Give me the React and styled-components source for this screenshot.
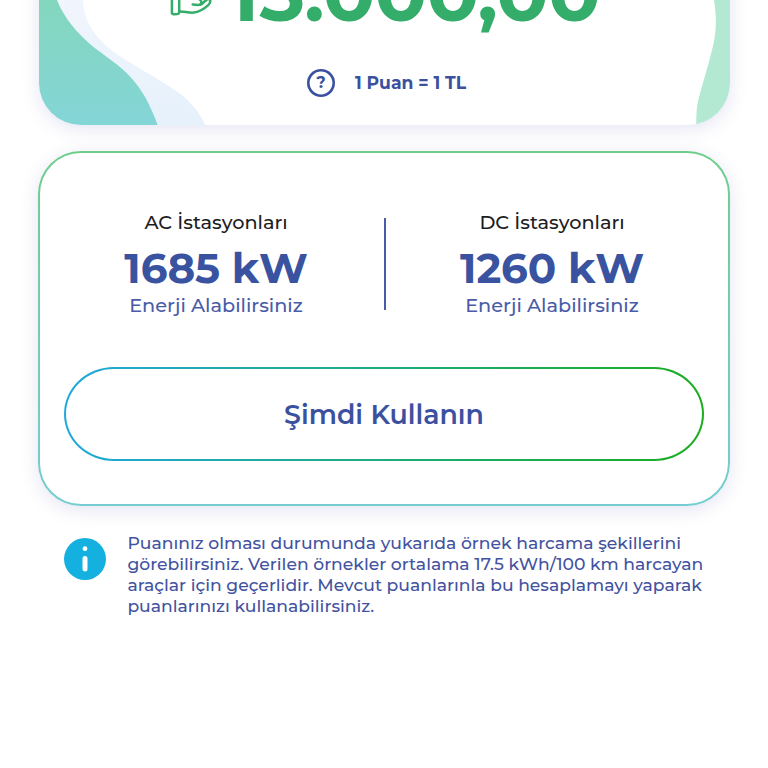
import React from 'react';
import styled, { createGlobalStyle } from 'styled-components';

const GlobalStyle = createGlobalStyle`
  * {
    box-sizing: border-box;
  }
  body {
    margin: 0;
    background: #fff;
    font-family: Montserrat, 'Liberation Sans', sans-serif;
  }
`;

const Page = styled.main`
  height: 768px;
  overflow: hidden;
  padding: 0 38px;
`;

const BalanceCard = styled.section`
  position: relative;
  display: flex;
  flex-direction: column;
  justify-content: flex-end;
  align-items: center;
  height: 325px;
  margin: -200px 0.5px 0;
  padding-bottom: 27px;
  border-radius: 42px;
  background: #fff;
  box-shadow: 0 4px 18px rgba(90, 90, 180, 0.16);
`;

const Waves = styled.svg`
  position: absolute;
  left: 0;
  bottom: 0;
  width: 100%;
  height: 125px;
  border-radius: 0 0 42px 42px;
`;

const Balance = styled.div`
  position: relative;
  display: flex;
  align-items: flex-end;
  gap: 17px;
  height: 94px;
  margin-left: 2px;
`;

const HandIcon = styled.svg`
  width: 42px;
  height: 94px;
  fill: none;
  stroke: #33ad69;
  stroke-width: 2.5;
  stroke-linecap: round;
  stroke-linejoin: round;
`;

const Amount = styled.strong`
  color: #33ad69;
  font-size: 77px;
  font-weight: 700;
  line-height: 94px;
  letter-spacing: -0.4px;
`;

const Rate = styled.div`
  position: relative;
  display: flex;
  align-items: center;
  gap: 20px;
  margin-top: 28px;
  padding-left: 5px;
  color: #3b519f;
  font-size: 17.2px;
  font-weight: 700;
  line-height: 30px;
`;

const Question = styled.span`
  display: flex;
  align-items: center;
  justify-content: center;
  width: 28px;
  height: 28px;
  border-radius: 50%;
  box-shadow: inset 0 0 0 2.6px #3b519f;
  font-size: 16px;
  font-weight: 700;
`;

const UsageCard = styled.section`
  height: 355px;
  margin-top: 26px;
  padding: 65px 24px 0;
  border: 2px solid transparent;
  border-radius: 43px;
  background: linear-gradient(#fff, #fff) padding-box,
    linear-gradient(#6fcd8c, #75cdd2) border-box;
  box-shadow: 0 4px 18px rgba(90, 90, 180, 0.16);
`;

const Stations = styled.div`
  display: flex;
  margin: 0 -15.5px;
`;

const Station = styled.div`
  flex: 1;
  display: flex;
  flex-direction: column;
  align-items: center;
  margin-top: -8px;
`;

const StationName = styled.span`
  color: #1d1d1f;
  font-size: 19.3px;
  font-weight: 500;
  line-height: 24px;
`;

const Energy = styled.strong`
  margin-top: 8px;
  color: #3953a1;
  font-size: 42px;
  font-weight: 700;
  line-height: 52px;
  letter-spacing: -0.1px;
`;

const Hint = styled.span`
  margin-top: -1px;
  color: #4a5ca8;
  font-size: 19.3px;
  font-weight: 500;
  line-height: 24px;
`;

const Divider = styled.div`
  width: 2px;
  height: 92px;
  margin-right: -1px;
  background: #4a5ca8;
`;

const UseButton = styled.button`
  display: block;
  width: 100%;
  height: 94px;
  margin-top: 50px;
  padding: 0;
  border: 2px solid transparent;
  border-radius: 50px / 47px;
  background: linear-gradient(#fff, #fff) padding-box,
    linear-gradient(90deg, #1fa9dc, #1aad1f) border-box;
  color: #3b519f;
  font: 600 26.8px Montserrat, 'Liberation Sans', sans-serif;
`;

const Info = styled.section`
  display: flex;
  align-items: flex-start;
  gap: 21px;
  margin-top: 26px;
  padding-left: 26.4px;
`;

const InfoIcon = styled.svg`
  width: 42px;
  height: 42px;
  margin-top: 6px;
`;

const InfoText = styled.p`
  margin: 0;
  color: #44539f;
  font-size: 17.2px;
  font-weight: 500;
  line-height: 21px;
  white-space: pre-line;
`;

const infoLines = [
  'Puanınız olması durumunda yukarıda örnek harcama şekillerini',
  'görebilirsiniz. Verilen örnekler ortalama 17.5 kWh/100 km harcayan',
  'araçlar için geçerlidir. Mevcut puanlarınla bu hesaplamayı yaparak',
  'puanlarınızı kullanabilirsiniz.'
];

const CardWaves = () => (
  <Waves viewBox="38.5 0 691 125" preserveAspectRatio="none">
    <defs>
      <linearGradient id="wave" x1="0" y1="0" x2="0" y2="1">
        <stop offset="0" stopColor="#83d7bd" />
        <stop offset="1" stopColor="#84d5d7" />
      </linearGradient>
      <linearGradient id="mist" x1="0" y1="0" x2="0" y2="1">
        <stop offset="0" stopColor="#f1f5fd" />
        <stop offset="1" stopColor="#e6f1fb" />
      </linearGradient>
    </defs>
    <path
      d="M38 0H82.7C83 24 98 42 120 56.5C141 70 160 80 175 90.5C190 101 199 112 205 126H38Z"
      fill="url(#mist)"
    />
    <path
      d="M38 0H56.5C64 19 77 33 90 44.5C104 56 118 64 130 77C142 90 150 105 157.5 126H38Z"
      fill="url(#wave)"
    />
    <path
      d="M713.5 0C716.5 18 716 34 711.5 50C707 68 702 84 698 99C696 107 695.8 114 695.8 126H731V0Z"
      fill="#b3e8d3"
    />
  </Waves>
);

const StationInfo = ({ name, energy }) => (
  <Station>
    <StationName>{name}</StationName>
    <Energy>{energy}</Energy>
    <Hint>Enerji Alabilirsiniz</Hint>
  </Station>
);

const App = () => (
  <Page>
    <GlobalStyle />
    <BalanceCard>
      <CardWaves />
      <Balance>
        <HandIcon viewBox="169 -54 42 94">
          <path d="M170.9 -12V12.4Q170.9 14.3 172.8 14.2L176.5 13.9Q178.2 13.7 178.2 12V-12" />
          <path d="M178.2 11.6C183 11.2 187 13 192.5 12.6C198 12 203 9 207.5 4.8C210.5 1.8 209.5 -1.5 206.5 -0.8C204 0 203 3 199.5 4.7" />
          <path d="M191.7 4.4L197 5Q200.5 5 200.3 1.8C200 -1 197 -2 192 -3" />
        </HandIcon>
        <Amount>15.000,00</Amount>
      </Balance>
      <Rate>
        <Question>?</Question>
        1 Puan = 1 TL
      </Rate>
    </BalanceCard>
    <UsageCard>
      <Stations>
        <StationInfo name="AC İstasyonları" energy="1685 kW" />
        <Divider />
        <StationInfo name="DC İstasyonları" energy="1260 kW" />
      </Stations>
      <UseButton>Şimdi Kullanın</UseButton>
    </UsageCard>
    <Info>
      <InfoIcon viewBox="0 0 42 42">
        <circle cx="21" cy="21" r="21" fill="#13b0e0" />
        <circle cx="21" cy="10.7" r="2.4" fill="#fff" />
        <rect x="18.5" y="18" width="5" height="15.5" rx="2.5" fill="#fff" />
      </InfoIcon>
      <InfoText>{infoLines.join('\n')}</InfoText>
    </Info>
  </Page>
);

export default App;
